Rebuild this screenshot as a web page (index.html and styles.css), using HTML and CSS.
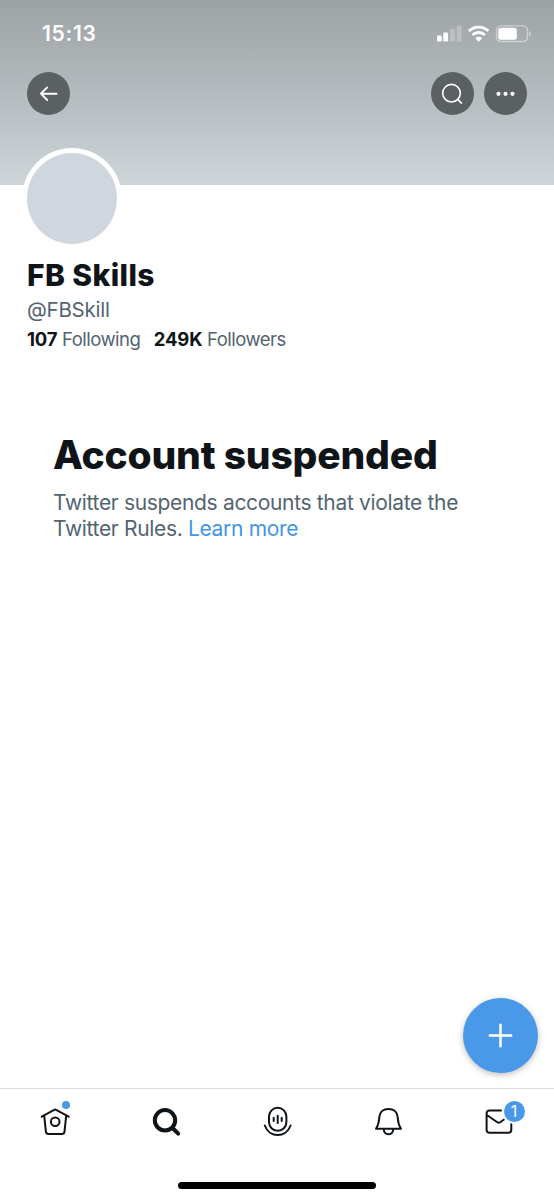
FILE: index.html
```html
<!DOCTYPE html>
<html lang="en">

<head>
    <meta charset="UTF-8">
    <meta name="viewport" content="width=device-width, initial-scale=1.0">
    <title>FB Skills</title>
    <link rel="stylesheet" href="styles.css">
</head>

<body>

    <!-- Banner with status bar and actions -->
    <header class="banner">
        <div class="status-bar">
            <span class="time">15:13</span>
            <svg class="status-icons" width="96" height="18" viewBox="0 0 96 18" fill="#fff">
                <rect x="1" y="10.500" width="4.800" height="6" rx="1.2" />
                <rect x="7.300" y="7.500" width="4.800" height="9" rx="1.2" />
                <rect x="14.200" y="4" width="4.800" height="12.500" rx="1.2" opacity=".25" />
                <rect x="20.800" y="0.500" width="4.800" height="16" rx="1.2" opacity=".25" />
                <g fill="none" stroke="#fff" stroke-width="2.800">
                    <path d="M33 6a14 14 0 0 1 19.400 0" />
                    <path d="M36.500 10a9 9 0 0 1 12.400 0" />
                </g>
                <path d="M39.300 13.200a5 5 0 0 1 6.800 0L42.700 16.800z" />
                <rect x="60.500" y="0.900" width="31" height="15.600" rx="4.500" fill="none" stroke="#fff" stroke-width="1.400" opacity=".45" />
                <rect x="62.300" y="2.700" width="18.500" height="12" rx="2.500" />
                <path d="M93 6c2.200.8 2.200 5 0 5.800z" opacity=".45" />
            </svg>
        </div>
        <div class="actions">
            <button class="round-btn back" aria-label="Back">
                <svg width="43" height="43" viewBox="0 0 43 43" fill="none" stroke="#fff" stroke-width="1.9" stroke-linecap="round" stroke-linejoin="round">
                    <path d="M29.500 21.700H14M20.200 15.400l-6.300 6.300 6.300 6.300" />
                </svg>
            </button>
            <button class="round-btn" aria-label="Search">
                <svg width="43" height="43" viewBox="0 0 43 43" fill="none" stroke="#fff" stroke-width="1.6" stroke-linecap="round">
                    <circle cx="20.500" cy="21.200" r="8.800" />
                    <path d="M26.800 27.400l3.600 3.700" />
                </svg>
            </button>
            <button class="round-btn" aria-label="More">
                <svg width="43" height="43" viewBox="0 0 43 43" fill="#fff">
                    <circle cx="14.500" cy="21.800" r="2.100" />
                    <circle cx="21.500" cy="21.800" r="2.100" />
                    <circle cx="28.500" cy="21.800" r="2.100" />
                </svg>
            </button>
        </div>
    </header>

    <!-- Profile -->
    <section class="profile">
        <div class="avatar"></div>
        <h1 class="name">FB Skills</h1>
        <p class="handle">@FBSkill</p>
        <p class="stats">
            <span class="stat"><b>107</b> Following</span>
            <span class="stat"><b>249K</b> Followers</span>
        </p>
    </section>

    <main class="notice">
        <h2 class="notice-title">Account suspended</h2>
        <p class="notice-text">Twitter suspends accounts that violate the<br>Twitter Rules. <a href="#">Learn more</a></p>
    </main>

    <button class="compose" aria-label="Compose">
        <svg width="75" height="75" viewBox="0 0 75 75" stroke="#fff" stroke-width="2.500" stroke-linecap="round">
            <path d="M26.800 37.500h21.400M37.500 26.800v21.400" />
        </svg>
    </button>

    <!-- Tab bar -->
    <nav class="tabs">
        <a class="tab" href="#" aria-label="Home">
            <svg width="40" height="40" viewBox="0 0 40 40" fill="none" stroke="#0f1419" stroke-width="2" stroke-linecap="round" stroke-linejoin="round">
                <path d="M6.700 14.700L20.200 7.400l13.500 7.300M9.200 13.700l1.700 16c.2 1.600 1 2.300 2.500 2.300H27c1.500 0 2.300-.7 2.500-2.300l1.700-16" />
                <circle cx="20.200" cy="19.800" r="4.300" />
            </svg>
            <span class="dot"></span>
        </a>
        <a class="tab" href="#" aria-label="Search">
            <svg width="40" height="40" viewBox="0 0 40 40" fill="none" stroke="#0f1419" stroke-width="4" stroke-linecap="round">
                <circle cx="19" cy="18.300" r="10.200" />
                <path d="M27 26.500l5.200 5.200" />
            </svg>
        </a>
        <a class="tab" href="#" aria-label="Spaces">
            <svg width="40" height="40" viewBox="0 0 40 40" fill="none" stroke="#0f1419" stroke-width="2" stroke-linecap="round">
                <rect x="12" y="5.800" width="17.400" height="23" rx="8.700" />
                <path d="M7.800 23.500c4.500 12.700 21.300 12.700 25.800 0M16.700 15.700v3.400M20.700 13.700v7.400M24.700 15.700v3.400" />
            </svg>
        </a>
        <a class="tab" href="#" aria-label="Notifications">
            <svg width="40" height="40" viewBox="0 0 40 40" fill="none" stroke="#0f1419" stroke-width="2" stroke-linecap="round" stroke-linejoin="round">
                <path d="M8 26.700h25c-3-4.300-3-7-3.300-11.500C29.300 9.900 25.500 7 20.500 7s-8.800 2.900-9.200 8.200c-.3 4.500-.3 7.200-3.300 11.500z" />
                <path d="M15.700 27c.2 7 9.400 7 9.600 0" />
            </svg>
        </a>
        <a class="tab" href="#" aria-label="Messages">
            <svg width="40" height="40" viewBox="0 0 40 40" fill="none" stroke="#0f1419" stroke-width="2" stroke-linecap="round" stroke-linejoin="round">
                <path d="M22 8.500H10.300a2.700 2.700 0 0 0-2.700 2.700v16.900a2.700 2.700 0 0 0 2.700 2.700h19.300a2.700 2.700 0 0 0 2.700-2.700v-5.800M7.800 13l10.500 7.300c1.100.8 1.800.8 2.900 0l3.500-2.500" />
            </svg>
            <span class="badge">1</span>
        </a>
    </nav>
    <div class="home-indicator"></div>

</body>

</html>
```

FILE: styles.css
```css
/* Basic Reset */
* {
    margin: 0;
    padding: 0;
    box-sizing: border-box;
}

body {
    position: relative;
    display: flex;
    flex-direction: column;
    height: 1200px;
    background-color: #fff;
    font-family: Inter, 'Liberation Sans', sans-serif;
    color: #0f1419;
    overflow: hidden;
}

svg {
    display: block;
}

button {
    border: none;
    cursor: pointer;
}

/* Banner */
.banner {
    flex: none;
    height: 185px;
    background: linear-gradient(#9da2a5, #b4babd 50%, #cfd6da);
}

.status-bar {
    display: flex;
    justify-content: space-between;
    align-items: center;
    height: 72px;
    padding: 0 22px 5px 42px;
}

.time {
    font-size: 21px;
    font-weight: 600;
    letter-spacing: 0.7px;
    color: #fff;
}

.actions {
    display: flex;
    gap: 10.500px;
    padding: 0 27px;
}

.round-btn {
    width: 43px;
    height: 43px;
    border-radius: 50%;
    background-color: #5b6063;
}

.back {
    margin-right: auto;
}

/* Profile */
.profile {
    padding: 0 27px;
}

.avatar {
    width: 100px;
    height: 101px;
    margin: -37px 0 0 -5px;
    border: 5px solid #fff;
    border-radius: 50%;
    background-color: #cfd6dd;
}

.name {
    margin-top: 7px;
    font-size: 30px;
    line-height: 38px;
    font-weight: 800;
    letter-spacing: 0.4px;
}

.handle {
    margin-top: 3px;
    font-size: 20.500px;
    line-height: 26px;
    letter-spacing: -0.25px;
    color: #536471;
}

.stats {
    display: flex;
    gap: 13.500px;
    margin-top: 3px;
    font-size: 18.500px;
    line-height: 26px;
    letter-spacing: -0.5px;
    color: #536471;
}

.stats b {
    letter-spacing: -0.2px;
    color: #0f1419;
}

/* Suspended notice */
.notice {
    padding: 79px 53px 0;
}

.notice-title {
    font-size: 39px;
    line-height: 48px;
    font-weight: 800;
    letter-spacing: -0.2px;
    white-space: nowrap;
}

.notice-text {
    margin-top: 11px;
    font-size: 21px;
    line-height: 25.500px;
    letter-spacing: -0.33px;
    color: #536471;
    white-space: nowrap;
}

.notice-text a {
    color: #4595e6;
    text-decoration: none;
}

/* Compose button */
.compose {
    position: absolute;
    right: 16px;
    bottom: 127px;
    width: 75px;
    height: 75px;
    border-radius: 50%;
    background-color: #4a99e9;
    box-shadow: 0 2px 6px rgba(0, 0, 0, 0.25);
}

/* Tab bar */
.tabs {
    display: grid;
    grid-template-columns: repeat(5, 1fr);
    flex: none;
    margin-top: auto;
    height: 94px;
    padding-top: 13px;
    border-top: 1px solid #d5dbdf;
}

.tab {
    position: relative;
    justify-self: center;
    width: 40px;
    height: 40px;
}

.dot {
    position: absolute;
    top: -1px;
    right: 5px;
    width: 8px;
    height: 8px;
    border-radius: 50%;
    background-color: #4a99e9;
}

.badge {
    position: absolute;
    top: -1px;
    left: 25px;
    width: 21px;
    height: 21px;
    border-radius: 50%;
    background-color: #4a99e9;
    color: #fff;
    font-size: 16px;
    line-height: 21px;
    text-align: center;
}

.home-indicator {
    flex: none;
    width: 198px;
    height: 7px;
    margin: 0 auto 11px;
    border-radius: 4px;
    background-color: #000;
}
```
